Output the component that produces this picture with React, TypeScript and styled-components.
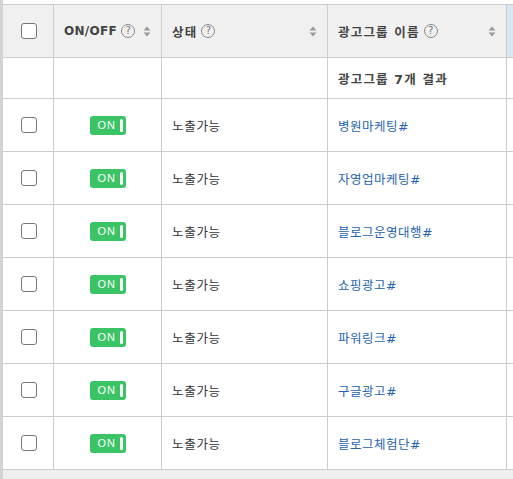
import React from "react";
import styled, { createGlobalStyle } from "styled-components";

const GlobalStyle = createGlobalStyle`
  html, body {
    margin: 0;
    padding: 0;
    background: #ffffff;
  }
  body {
    font-family: "DejaVu Sans", "Noto Sans CJK KR", sans-serif;
    overflow: hidden;
  }
`;

const Page = styled.div`
  width: 513px;
  height: 479px;
  display: flex;
  flex-direction: column;
  border-left: 3px solid #d3d3d3;
  box-sizing: border-box;
  padding-top: 4px;
  overflow: hidden;
`;

const Grid = styled.div`
  display: grid;
  grid-template-columns: 51px 108px 166px 179px 80px;
  grid-template-rows: 53px 41px repeat(7, 53px);
  border-top: 1px solid #cccccc;
  width: max-content;
`;

const Cell = styled.div<{ $head?: boolean; $accent?: boolean; $center?: boolean }>`
  box-sizing: border-box;
  border-right: 1px solid #cccccc;
  border-bottom: 1px solid #cccccc;
  background: ${(p) => (p.$accent ? "#d9e6ef" : p.$head ? "#f0f0f0" : "#ffffff")};
  display: flex;
  align-items: center;
  justify-content: ${(p) => (p.$center ? "center" : "flex-start")};
  padding: 0 ${(p) => (p.$center ? "0" : "10px")};
  font-size: 12px;
  color: #333333;
`;

const HeadLabel = styled.span`
  font-weight: bold;
  color: #444444;
  font-size: 12.5px;
  letter-spacing: 1.2px;
  display: flex;
  align-items: center;
  gap: 3px;
`;

const LatinLabel = styled.span`
  font-weight: bold;
  font-size: 12px;
  letter-spacing: 0.3px;
`;

const Help = styled.span`
  width: 14px;
  height: 14px;
  border: 1px solid #888888;
  border-radius: 50%;
  color: #777777;
  font-weight: normal;
  font-size: 10px;
  letter-spacing: 0;
  display: inline-flex;
  align-items: center;
  justify-content: center;
  line-height: 1;
  box-sizing: border-box;
  margin-left: 1px;
`;

const HeadInner = styled.div`
  display: flex;
  align-items: center;
  justify-content: space-between;
  width: 100%;
`;

const SortIcon = () => (
  <svg width="8" height="11" viewBox="0 0 8 11">
    <path d="M4 0.5 L7.5 4.5 L0.5 4.5 Z" fill="#9a9a9a" />
    <path d="M4 10.5 L7.5 6.5 L0.5 6.5 Z" fill="#9a9a9a" />
  </svg>
);

const Check = styled.span`
  width: 16px;
  height: 16px;
  box-sizing: border-box;
  border: 1px solid #777777;
  border-radius: 3px;
  background: #ffffff;
  margin-left: 1px;
`;

const Toggle = styled.span`
  width: 36px;
  height: 19px;
  border-radius: 3px;
  background: #3bc466;
  display: flex;
  align-items: center;
  justify-content: space-between;
  padding: 0 3px 0 8px;
  box-sizing: border-box;
  color: #ffffff;
  font-family: "Liberation Sans", sans-serif;
  font-size: 11px;
  letter-spacing: 1px;
`;

const Knob = styled.span`
  width: 3px;
  height: 13px;
  border-radius: 2px;
  background: #ffffff;
`;

const Summary = styled.span`
  font-weight: bold;
  color: #444444;
  font-size: 12.5px;
  letter-spacing: 1.2px;
`;

const Link = styled.a`
  color: #2563ae;
  text-decoration: none;
  font-size: 12.5px;
  letter-spacing: 0.5px;
`;

const Status = styled.span`
  color: #333333;
  font-size: 12.5px;
  letter-spacing: 0.7px;
`;

const Footer = styled.div`
  flex: 1;
  background: #efefef;
`;

const groups = [
  "병원마케팅#",
  "자영업마케팅#",
  "블로그운영대행#",
  "쇼핑광고#",
  "파워링크#",
  "구글광고#",
  "블로그체험단#",
];

export default function App() {
  return (
    <>
      <GlobalStyle />
      <Page>
        <Grid>
          <Cell $head $center>
            <Check />
          </Cell>
          <Cell $head>
            <HeadInner>
              <HeadLabel>
                <LatinLabel>ON/OFF</LatinLabel>
                <Help>?</Help>
              </HeadLabel>
              <SortIcon />
            </HeadInner>
          </Cell>
          <Cell $head>
            <HeadInner>
              <HeadLabel>
                상태 <Help>?</Help>
              </HeadLabel>
              <SortIcon />
            </HeadInner>
          </Cell>
          <Cell $head>
            <HeadInner>
              <HeadLabel>
                광고그룹 이름<Help>?</Help>
              </HeadLabel>
              <SortIcon />
            </HeadInner>
          </Cell>
          <Cell $accent />

          <Cell />
          <Cell />
          <Cell />
          <Cell>
            <Summary>광고그룹 7개 결과</Summary>
          </Cell>
          <Cell />

          {groups.map((name) => (
            <React.Fragment key={name}>
              <Cell $center>
                <Check />
              </Cell>
              <Cell $center>
                <Toggle>
                  ON
                  <Knob />
                </Toggle>
              </Cell>
              <Cell>
                <Status>노출가능</Status>
              </Cell>
              <Cell>
                <Link href="#">{name}</Link>
              </Cell>
              <Cell />
            </React.Fragment>
          ))}
        </Grid>
        <Footer />
      </Page>
    </>
  );
}
